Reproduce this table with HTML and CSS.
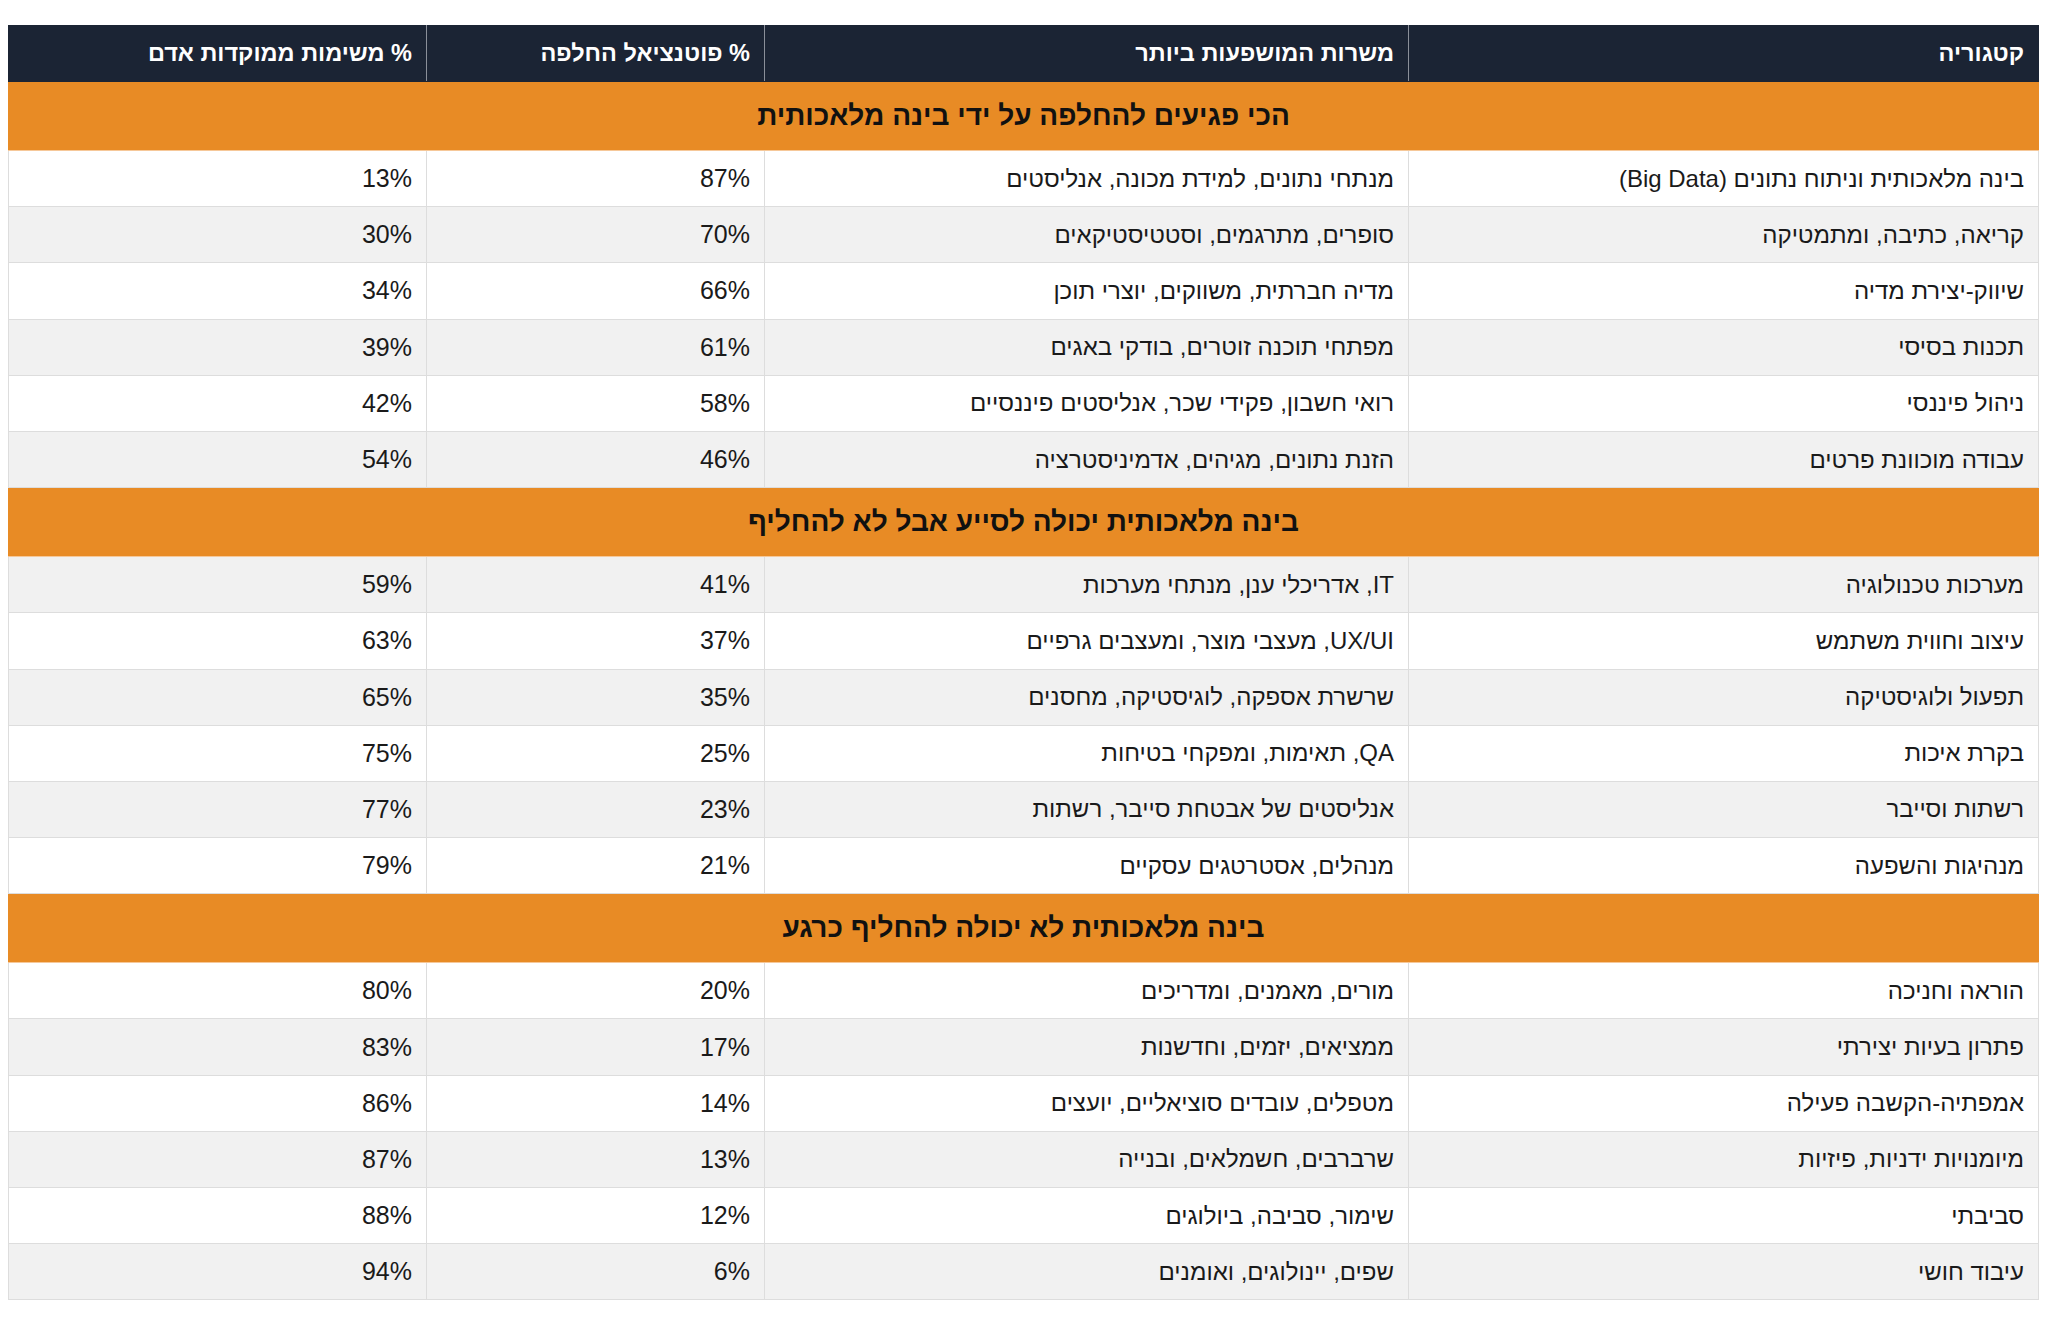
FILE: index.html
```html
<!DOCTYPE html>
<html lang="he" dir="rtl">
<head>
<meta charset="utf-8">
<title>השפעת בינה מלאכותית על משרות</title>
<link rel="stylesheet" href="styles.css">
</head>
<body>
<div class="wrap">
<table class="ai-table">
  <colgroup>
    <col class="c-cat">
    <col class="c-jobs">
    <col class="c-pot">
    <col class="c-human">
  </colgroup>
  <thead>
    <tr>
      <th>קטגוריה</th>
      <th>משרות המושפעות ביותר</th>
      <th>% פוטנציאל החלפה</th>
      <th>% משימות ממוקדות אדם</th>
    </tr>
  </thead>
  <tbody>
    <tr class="section"><td colspan="4">הכי פגיעים להחלפה על ידי בינה מלאכותית</td></tr>
    <tr><td>בינה מלאכותית וניתוח נתונים (Big Data)</td><td>מנתחי נתונים, למידת מכונה, אנליסטים</td><td class="num">87%</td><td class="num">13%</td></tr>
    <tr><td>קריאה, כתיבה, ומתמטיקה</td><td>סופרים, מתרגמים, וסטטיסטיקאים</td><td class="num">70%</td><td class="num">30%</td></tr>
    <tr><td>שיווק-יצירת מדיה</td><td>מדיה חברתית, משווקים, יוצרי תוכן</td><td class="num">66%</td><td class="num">34%</td></tr>
    <tr><td>תכנות בסיסי</td><td>מפתחי תוכנה זוטרים, בודקי באגים</td><td class="num">61%</td><td class="num">39%</td></tr>
    <tr><td>ניהול פיננסי</td><td>רואי חשבון, פקידי שכר, אנליסטים פיננסיים</td><td class="num">58%</td><td class="num">42%</td></tr>
    <tr><td>עבודה מוכוונת פרטים</td><td>הזנת נתונים, מגיהים, אדמיניסטרציה</td><td class="num">46%</td><td class="num">54%</td></tr>
    <tr class="section"><td colspan="4">בינה מלאכותית יכולה לסייע אבל לא להחליף</td></tr>
    <tr><td>מערכות טכנולוגיה</td><td>IT, אדריכלי ענן, מנתחי מערכות</td><td class="num">41%</td><td class="num">59%</td></tr>
    <tr><td>עיצוב וחווית משתמש</td><td>UX/UI, מעצבי מוצר, ומעצבים גרפיים</td><td class="num">37%</td><td class="num">63%</td></tr>
    <tr><td>תפעול ולוגיסטיקה</td><td>שרשרת אספקה, לוגיסטיקה, מחסנים</td><td class="num">35%</td><td class="num">65%</td></tr>
    <tr><td>בקרת איכות</td><td>QA, תאימות, ומפקחי בטיחות</td><td class="num">25%</td><td class="num">75%</td></tr>
    <tr><td>רשתות וסייבר</td><td>אנליסטים של אבטחת סייבר, רשתות</td><td class="num">23%</td><td class="num">77%</td></tr>
    <tr><td>מנהיגות והשפעה</td><td>מנהלים, אסטרטגים עסקיים</td><td class="num">21%</td><td class="num">79%</td></tr>
    <tr class="section"><td colspan="4">בינה מלאכותית לא יכולה להחליף כרגע</td></tr>
    <tr><td>הוראה וחניכה</td><td>מורים, מאמנים, ומדריכים</td><td class="num">20%</td><td class="num">80%</td></tr>
    <tr><td>פתרון בעיות יצירתי</td><td>ממציאים, יזמים, וחדשנות</td><td class="num">17%</td><td class="num">83%</td></tr>
    <tr><td>אמפתיה-הקשבה פעילה</td><td>מטפלים, עובדים סוציאליים, יועצים</td><td class="num">14%</td><td class="num">86%</td></tr>
    <tr><td>מיומנויות ידניות, פיזיות</td><td>שרברבים, חשמלאים, ובנייה</td><td class="num">13%</td><td class="num">87%</td></tr>
    <tr><td>סביבתי</td><td>שימור, סביבה, ביולוגים</td><td class="num">12%</td><td class="num">88%</td></tr>
    <tr><td>עיבוד חושי</td><td>שפים, יינולוגים, ואומנים</td><td class="num">6%</td><td class="num">94%</td></tr>
  </tbody>
</table>
</div>
</body>
</html>
```
FILE: styles.css
```css
html, body {
  margin: 0;
  padding: 0;
  background: #ffffff;
}

body {
  font-family: "Liberation Sans", Arial, "DejaVu Sans", sans-serif;
  color: #1a1a1a;
}

.wrap {
  padding: 25px 9px 0 9px;
}

.ai-table {
  width: 100%;
  border-collapse: collapse;
  table-layout: fixed;
  direction: rtl;
}

.c-cat { width: 630px; }
.c-jobs { width: 644px; }
.c-pot { width: 338px; }
.c-human { width: 418px; }

.ai-table th {
  background: #1b2434;
  color: #ffffff;
  font-weight: 700;
  font-size: 23.5px;
  text-align: right;
  height: 56px;
  padding: 0 14px;
  border: 1px solid #1b2434;
  border-left: 1px solid #8a8f99;
  box-sizing: border-box;
}

.ai-table th:last-child {
  border-left-color: #1b2434;
}

.ai-table td {
  font-size: 24px;
  text-align: right;
  height: 56.2px;
  padding: 0 14px;
  border: 1px solid #dddddd;
  box-sizing: border-box;
  background: #ffffff;
  white-space: nowrap;
}

.ai-table td.num {
  font-size: 25px;
}

.ai-table tbody tr:nth-child(odd) td {
  background: #f1f1f1;
}

.ai-table tbody tr.section td {
  background: #e88b25;
  color: #111111;
  font-weight: 700;
  font-size: 28px;
  text-align: center;
  height: 69px;
  border: 1px solid #e88b25;
  border-bottom: 1px solid #f6c899;
}
```
